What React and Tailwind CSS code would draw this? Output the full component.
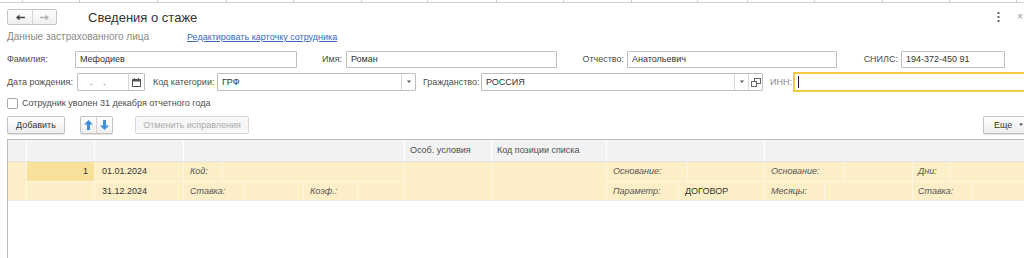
import React from "react";

const topTicks = [23, 57, 78, 69, 67, 68, 66, 69, 67, 68, 66, 50, 67, 68, 67, 67];

function Caret() {
  return (
    <svg width="6" height="4" viewBox="0 0 6 4" className="block">
      <path d="M1 0.5 L5 0.5 L3 3 Z" fill="#555" />
    </svg>
  );
}

function Calendar() {
  return (
    <svg width="9" height="9" viewBox="0 0 9 9" className="block">
      <rect x="0.5" y="1.5" width="8" height="7" fill="none" stroke="#555" />
      <rect x="0.5" y="1.5" width="8" height="2" fill="#555" />
      <rect x="2" y="0" width="1" height="2" fill="#555" />
      <rect x="6" y="0" width="1" height="2" fill="#555" />
    </svg>
  );
}

function OpenIcon() {
  return (
    <svg width="10" height="9" viewBox="0 0 10 9" className="block">
      <rect x="3.5" y="0.5" width="6" height="5" fill="none" stroke="#666" />
      <rect x="0.5" y="3.5" width="5" height="5" fill="#fff" stroke="#666" />
    </svg>
  );
}

function Arrow({ up }) {
  return (
    <svg width="9" height="10" viewBox="0 0 9 10" className="block">
      {up ? (
        <path d="M4.5 0 L9 4.5 L6 4.5 L6 10 L3 10 L3 4.5 L0 4.5 Z" fill="#3f8fd8" />
      ) : (
        <path d="M4.5 10 L9 5.5 L6 5.5 L6 0 L3 0 L3 5.5 L0 5.5 Z" fill="#3f8fd8" />
      )}
    </svg>
  );
}

function NavArrow({ left, color }) {
  return (
    <svg width="9" height="7" viewBox="0 0 9 7" className="block">
      {left ? (
        <path d="M0 3.5 L3.5 0.5 L3.5 2.7 L9 2.7 L9 4.3 L3.5 4.3 L3.5 6.5 Z" fill={color} />
      ) : (
        <path d="M9 3.5 L5.5 0.5 L5.5 2.7 L0 2.7 L0 4.3 L5.5 4.3 L5.5 6.5 Z" fill={color} />
      )}
    </svg>
  );
}

const btn =
  "h-full flex items-center justify-center border border-[#c2c2c2] rounded-[2px] bg-gradient-to-b from-white to-[#eeeeee] shadow-[0_1px_1px_rgba(0,0,0,0.12)]";

const input = "h-full border border-[#bfbfbf] rounded-[1px] bg-white flex items-center text-[#333] pl-[4px]";

export default function App() {
  return (
    <div className="w-[1024px] h-[258px] overflow-hidden bg-white font-['Liberation_Sans',Arial,sans-serif] text-[9px] text-[#4d4d4d] leading-none whitespace-nowrap">
      {/* leftover strip at the very top */}
      <div className="h-[3px] flex border-b border-[#cfcfcf]">
        {topTicks.map((w, i) => (
          <div key={i} style={{ width: w }} className="h-full border-r border-[#cfcfcf] shrink-0" />
        ))}
      </div>

      {/* nav + title */}
      <div className="mt-[6px] h-[16px] flex items-center pl-[7px]">
        <div className="w-[50px] h-full flex border border-[#c4c4c4] rounded-[2px] bg-gradient-to-b from-white to-[#efefef]">
          <div className="w-[25px] flex items-center justify-center border-r border-[#d4d4d4]"><NavArrow left color="#444" /></div>
          <div className="flex-1 flex items-center justify-center"><NavArrow color="#b3b3b3" /></div>
        </div>
        <div className="ml-[31px] text-[13px] text-[#333]">Сведения о стаже</div>
        <div className="ml-auto flex items-center">
          <svg width="3" height="10" viewBox="0 0 3 10" className="block">
            <rect x="0.5" y="0" width="2" height="2" fill="#666" />
            <rect x="0.5" y="4" width="2" height="2" fill="#666" />
            <rect x="0.5" y="8" width="2" height="2" fill="#666" />
          </svg>
          <span className="ml-[17px] mr-[1px] text-[#999] text-[10px]">×</span>
        </div>
      </div>

      {/* section caption */}
      <div className="mt-[5px] h-[14px] flex items-center pl-[7px]">
        <span className="w-[180px] text-[10px] text-[#8a8a8a]">Данные застрахованного лица</span>
        <span className="text-[#3a68c0] underline">Редактировать карточку сотрудника</span>
      </div>

      {/* row 1 */}
      <div className="mt-[7px] h-[17px] flex pl-[7px]">
        <div className="w-[68px] flex items-center">Фамилия:</div>
        <div className={`${input} w-[222px]`}>Мефодиев</div>
        <div className="w-[49px] flex items-center justify-end pr-[4px]">Имя:</div>
        <div className={`${input} w-[211px]`}>Роман</div>
        <div className="w-[70px] flex items-center justify-end pr-[3px]">Отчество:</div>
        <div className={`${input} w-[210px]`}>Анатольевич</div>
        <div className="w-[64px] flex items-center justify-end pr-[3px]">СНИЛС:</div>
        <div className={`${input} w-[104px]`}>194-372-450 91</div>
      </div>

      {/* row 2 */}
      <div className="mt-[5px] h-[18px] flex items-center pl-[7px]">
        <div className="w-[70px] h-full flex items-center">Дата рождения:</div>
        <div className="w-[68px] h-full border border-[#bfbfbf] rounded-[1px] flex text-[#555]">
          <div className="flex-1 flex items-center pl-[12px] tracking-[4px]">. .</div>
          <div className="w-[16px] border-l border-[#d6d6d6] flex items-center justify-center"><Calendar /></div>
        </div>
        <div className="w-[72px] h-full flex items-center pl-[8px]">Код категории:</div>
        <div className="w-[199px] h-full border border-[#bfbfbf] rounded-[1px] flex text-[#333]">
          <div className="flex-1 flex items-center pl-[4px]">ГРФ</div>
          <div className="w-[14px] border-l border-[#d6d6d6] flex items-center justify-center"><Caret /></div>
        </div>
        <div className="w-[65px] h-full flex items-center pl-[7px]">Гражданство:</div>
        <div className="w-[282px] h-full border border-[#bfbfbf] rounded-[1px] flex text-[#333]">
          <div className="flex-1 flex items-center pl-[4px]">РОССИЯ</div>
          <div className="w-[14px] border-l border-[#d6d6d6] flex items-center justify-center"><Caret /></div>
          <div className="w-[14px] border-l border-[#d6d6d6] flex items-center justify-center"><OpenIcon /></div>
        </div>
        <div className="w-[30px] h-full flex items-center pl-[7px] text-[#8a8a8a]">ИНН:</div>
        <div className="flex-1 h-[20px] border-2 border-[#f5cb45] border-r-0 flex items-center pl-[3px]">
          <div className="w-px h-[12px] bg-[#222]" />
        </div>
      </div>

      {/* checkbox */}
      <div className="mt-[7px] h-[11px] flex items-center pl-[7px]">
        <div className="w-[11px] h-[11px] border border-[#a8a8a8] rounded-[2px] bg-white" />
        <span className="ml-[4px]">Сотрудник уволен 31 декабря отчетного года</span>
      </div>

      {/* command bar */}
      <div className="mt-[7px] h-[18px] flex pl-[7px]">
        <div className={`${btn} w-[58px] text-[#333]`}>Добавить</div>
        <div className="ml-[15px] w-[33px] h-full flex border border-[#c2c2c2] rounded-[2px] bg-gradient-to-b from-white to-[#eeeeee] shadow-[0_1px_1px_rgba(0,0,0,0.12)]">
          <div className="w-[16px] flex items-center justify-center border-r border-[#d4d4d4]"><Arrow up /></div>
          <div className="flex-1 flex items-center justify-center"><Arrow /></div>
        </div>
        <div className="ml-[22px] w-[114px] h-full flex items-center justify-center border border-[#d8d8d8] rounded-[2px] bg-[#f7f7f7] text-[#a9a9a9]">
          Отменить исправления
        </div>
        <div className={`${btn} ml-auto w-[41px] justify-start pl-[10px] text-[#333] border-r-0 rounded-r-none`}>
          Еще
          <span className="ml-[6px]"><Caret /></span>
        </div>
      </div>

      {/* table */}
      <div className="mt-[5px] pl-[7px]">
        <div className="h-[119px] border-l border-t border-[#bdbdbd] text-[#333]">
          <div className="h-[22px] flex bg-[#f2f2f2] border-b border-[#e4e4e4]">
            <div className="w-[19px] border-r border-white" />
            <div className="w-[68px] border-r border-white" />
            <div className="w-[89px] border-r border-white" />
            <div className="w-[221px] border-r border-white" />
            <div className="w-[87px] border-r border-white flex items-center pl-[5px] text-[#4d4d4d]">Особ. условия</div>
            <div className="w-[115px] border-r border-white flex items-center pl-[5px] text-[#4d4d4d]">Код позиции списка</div>
            <div className="w-[158px] border-r border-white" />
            <div className="flex-1" />
          </div>

          <div className="h-[39px] flex bg-[#fcefc7] border-b border-[#ececec]">
            <div className="w-[19px] border-r border-[#fdf7e1]" />
            <div className="w-[68px] border-r border-[#fdf7e1] flex flex-col">
              <div className="h-[20px] bg-[#f8e09a] border-b border-[#fdf7e1] flex items-center justify-end pr-[6px]">1</div>
              <div className="flex-1" />
            </div>
            <div className="w-[89px] border-r border-[#fdf7e1] flex flex-col">
              <div className="h-[20px] border-b border-[#fdf7e1] flex items-center pl-[7px]">01.01.2024</div>
              <div className="flex-1 flex items-center pl-[7px]">31.12.2024</div>
            </div>
            <div className="w-[221px] border-r border-[#fdf7e1] flex flex-col italic text-[#555]">
              <div className="h-[20px] border-b border-[#fdf7e1] flex">
                <div className="w-[39px] border-r border-[#fdf7e1] flex items-center pl-[6px]">Код:</div>
              </div>
              <div className="flex-1 flex">
                <div className="w-[60px] border-r border-[#fdf7e1] flex items-center pl-[6px]">Ставка:</div>
                <div className="w-[60px] border-r border-[#fdf7e1]" />
                <div className="w-[54px] border-r border-[#fdf7e1] flex items-center pl-[6px]">Коэф.:</div>
              </div>
            </div>
            <div className="w-[87px] border-r border-[#fdf7e1]" />
            <div className="w-[115px] border-r border-[#fdf7e1]" />
            <div className="w-[158px] border-r border-[#fdf7e1] flex flex-col">
              <div className="h-[20px] border-b border-[#fdf7e1] flex">
                <div className="w-[81px] border-r border-[#fdf7e1] flex items-center pl-[6px] italic text-[#555]">Основание:</div>
              </div>
              <div className="flex-1 flex">
                <div className="w-[72px] border-r border-[#fdf7e1] flex items-center pl-[6px] italic text-[#555]">Параметр:</div>
                <div className="flex-1 flex items-center pl-[6px]">ДОГОВОР</div>
              </div>
            </div>
            <div className="flex-1 flex flex-col italic text-[#555]">
              <div className="h-[20px] border-b border-[#fdf7e1] flex">
                <div className="w-[80px] border-r border-[#fdf7e1] flex items-center pl-[6px]">Основание:</div>
                <div className="w-[68px] border-r border-[#fdf7e1]" />
                <div className="w-[38px] border-r border-[#fdf7e1] flex items-center pl-[5px]">Дни:</div>
              </div>
              <div className="flex-1 flex">
                <div className="w-[60px] border-r border-[#fdf7e1] flex items-center pl-[6px]">Месяцы:</div>
                <div className="w-[88px] border-r border-[#fdf7e1]" />
                <div className="w-[59px] border-r border-[#fdf7e1] flex items-center pl-[5px]">Ставка:</div>
              </div>
            </div>
          </div>
        </div>
      </div>
    </div>
  );
}
